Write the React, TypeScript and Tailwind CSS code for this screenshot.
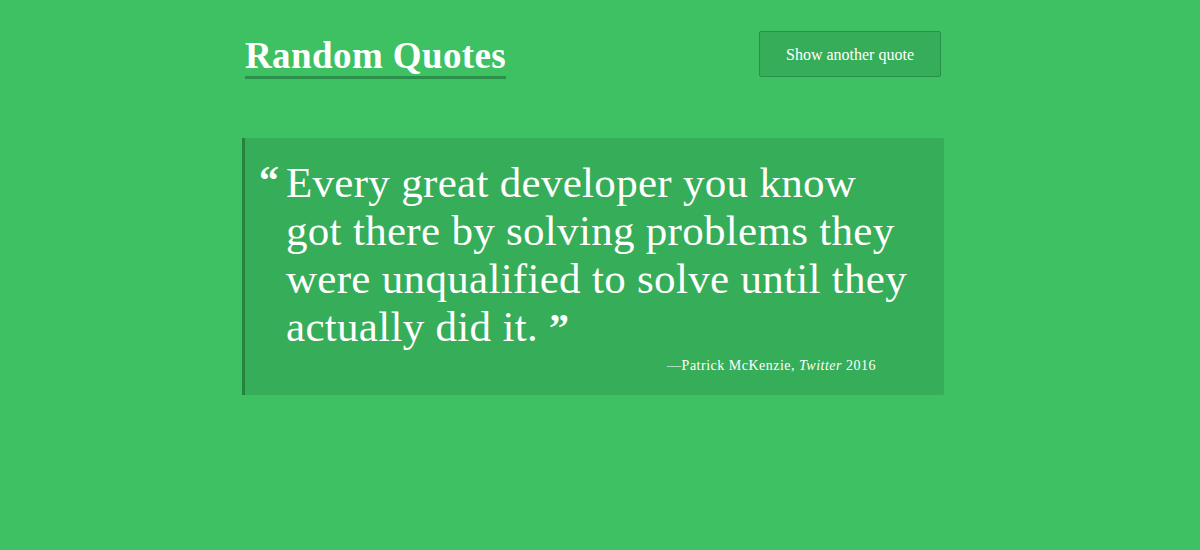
import React from 'react';

const serif = { fontFamily: '"Liberation Serif", "DejaVu Serif", serif' };

export default function App() {
  return (
    <div className="w-[1200px] h-[550px] bg-[#3dc162] text-white overflow-hidden" style={serif}>
      <div className="ml-[242px] w-[702px] pt-[31px]">
        {/* header */}
        <div className="flex items-start justify-between">
          <h1 className="ml-[3px] mt-[5px] text-[37px] leading-[40px] font-bold border-b-[3px] border-[#2a8f48] pb-[0px] tracking-[0.4px]">
            Random Quotes
          </h1>
          <button className="mr-[3px] w-[182px] h-[46px] pt-[2px] bg-[#36ad58] border border-[#2a8f48] rounded-[2px] text-[16px] text-white">
            Show another quote
          </button>
        </div>

        {/* quote */}
        <blockquote className="mt-[59px] h-[257px] bg-[#36ad58] border-l-[3px] border-[#25823f] rounded-r-[2px] pl-[14px] pr-[20px] pt-[21px]">
          <div className="flex">
            <span className="text-[40px] leading-[48px] font-bold w-[27px] shrink-0 -mt-[2px]">&ldquo;</span>
            <p className="w-[625px] text-[43px] leading-[48px] tracking-[0.3px]">
              Every great developer you know got there by solving problems they were unqualified to solve until they actually did it.&nbsp;<span className="font-bold text-[40px]">&rdquo;</span>
            </p>
          </div>
          <div className="text-right pr-[48px] mt-[3px] text-[14px] tracking-[0.5px]">
            —Patrick McKenzie, <em>Twitter</em> 2016
          </div>
        </blockquote>
      </div>
    </div>
  );
}
